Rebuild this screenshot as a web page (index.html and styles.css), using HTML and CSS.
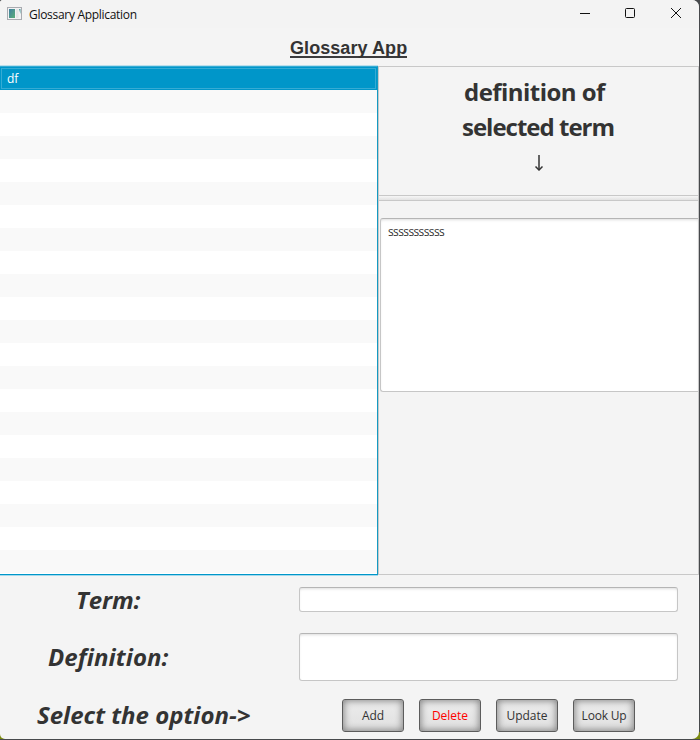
FILE: index.html
```html
<!DOCTYPE html>
<html lang="en">
<head>
<meta charset="utf-8">
<title>Glossary Application</title>
<link rel="stylesheet" href="styles.css">
</head>
<body>
<div class="window">
  <header class="titlebar">
    <svg class="app-icon" width="15" height="13" viewBox="0 0 15 13">
      <defs><linearGradient id="g" x1="0" y1="0" x2="1" y2="1"><stop offset="0" stop-color="#3f7fa0"/><stop offset="1" stop-color="#5aae78"/></linearGradient></defs>
      <rect x=".5" y=".5" width="14" height="12" fill="#f2f2f4" stroke="#a9abb0"/>
      <rect x="2" y="2" width="6" height="9" fill="url(#g)"/>
      <rect x="9" y="2" width="2.5" height="9" fill="#e4e5e6"/>
      <path d="M12 2h1.5v5z" fill="#4c9a9a"/>
    </svg>
    <span class="caption">Glossary Application</span>
    <svg class="controls" width="104" height="12" viewBox="0 0 104 12" fill="none" stroke="#111" stroke-width="1">
      <path d="M1 6.5h10"/>
      <rect x="46.5" y="1.5" width="9" height="9" rx="1"/>
      <path d="M92 1l10 10M102 1L92 11"/>
    </svg>
  </header>
  <h1 class="heading"><span>Glossary App</span></h1>
  <main class="main">
    <div class="list">
      <div class="item"><span class="item-text">df</span></div>
      <div class="stripes"></div>
    </div>
    <section class="side">
      <div class="intro">
        <div class="line l1"><span>definition of</span></div>
        <div class="line l2"><span>selected term</span></div>
        <svg class="arrow" width="10" height="16" viewBox="0 0 10 16" fill="none" stroke="#333" stroke-width="1.5"><path d="M5 0v14"/><path d="M1.5 11.5L5 15l3.5-3.5"/></svg>
      </div>
      <div class="divider"></div>
      <div class="detail"><div class="area"><span>sssssssssss</span></div></div>
    </section>
  </main>
  <footer class="form">
    <div class="label term"><span>Term:</span></div>
    <div class="field small"></div>
    <div class="label defn"><span>Definition:</span></div>
    <div class="field big"></div>
    <div class="label select"><span>Select the option-&gt;</span></div>
    <div class="buttons">
      <button class="add"><span>Add</span></button>
      <button class="delete"><span>Delete</span></button>
      <button class="update"><span>Update</span></button>
      <button class="lookup"><span>Look Up</span></button>
    </div>
  </footer>
</div>
</body>
</html>
```
FILE: styles.css
```css
* { box-sizing: border-box; }
body {
  margin: 0;
  width: 700px;
  height: 740px;
  overflow: hidden;
  background: linear-gradient(#47494c 0 732px, #7b8a10 732px 739px, #47494c 739px);
  font: 12px/16px "Open Sans", "Noto Sans", sans-serif;
  color: #333;
}
.window {
  width: 699px;
  height: 739px;
  background: #f4f4f4;
  border-radius: 3px 7px 7px 5px;
  overflow: hidden;
}
.titlebar {
  height: 28px;
  display: flex;
  align-items: center;
  padding: 0 16px 2px 7px;
  background: #f3f3f3;
}
.caption {
  margin-left: 7px;
  color: #111;
  font: 12px/16px "Open Sans", sans-serif;
  letter-spacing: -.3px;
  padding-top: 3px;
}
.controls { margin-left: auto; }
.heading {
  margin: 0;
  height: 38px;
  padding: 10px 0 0 290px;
  font: bold 18px/20px "Liberation Sans", sans-serif;
  letter-spacing: .07px;
}
.heading span {
  display: inline-block;
  height: 20px;
  border-bottom: 2px solid #3b3b3d;
}
.main { display: flex; height: 509px; }
.list {
  width: 378px;
  height: 509px;
  border-right: 1px solid #149ac2;
  border-bottom: 1px solid #0096c9;
  border-top: 1px solid #35abd4;
  box-shadow: 0 1px #a4d9ec, 0 -1px #b9dfec;
}
.item {
  height: 23px;
  background: #0096c9;
  padding: 1px;
}
.item-text {
  display: block;
  height: 21px;
  border: 1px solid #35abd4;
  color: #fff;
  padding: 2px 5px;
}
.stripes {
  height: 484px;
  background: repeating-linear-gradient(#f9f9f9 0 23px, #fff 23px 46px);
}
.side {
  width: 321px;
  border: 1px solid #c8c8c8;
  height: 509px;
}
.intro { height: 128px; padding-top: 7px; }
.line {
  font: bold 24px/35px "Open Sans", sans-serif;
  height: 35px;
  white-space: nowrap;
}
.l1 { padding-left: 85px; letter-spacing: -.55px; }
.l2 { padding-left: 83px; letter-spacing: -1px; }
.arrow { display: block; margin: 11px 0 0 155px; }
.divider {
  height: 6px;
  border-top: 1px solid #c8c8c8;
  border-bottom: 1px solid #c8c8c8;
  background: linear-gradient(#f6f6f6, #e2e2e2);
}
.detail { padding: 17px 0 0 1px; }
.area, .field {
  background: #fff;
  border: 1px solid #c6c6c6;
  border-top-color: #b5b5b5;
  border-radius: 3px;
  box-shadow: inset 0 2px 3px -1px #ddd;
}
.area {
  height: 174px;
  padding: 5px 7px;
  border-right: 0;
  border-radius: 3px 0 0 3px;
  letter-spacing: -.62px;
}
.form {
  display: grid;
  grid-template-columns: 299px 379px;
  grid-template-rows: 46px 60px 58px;
}
.label {
  font: italic bold 24px/35px "Open Sans", sans-serif;
  white-space: nowrap;
  padding-top: 7px;
}
.term { padding-left: 76px; letter-spacing: -.1px; }
.defn { padding-left: 48px; padding-top: 18px; letter-spacing: .08px; }
.select { padding-left: 37px; padding-top: 16px; }
.field { margin-top: 12px; }
.small { height: 25px; }
.big { height: 48px; }
.buttons {
  display: flex;
  gap: 15px;
  padding: 18px 0 0 43px;
}
button {
  width: 62px;
  height: 33px;
  padding: 0;
  border: 1px solid #5c5c5c;
  border-radius: 3px;
  background: linear-gradient(#ececec, #e0e0e0);
  box-shadow: inset 0 0 7px 1px #858585;
  color: #333;
  font: 12px/16px "Open Sans", sans-serif;
  white-space: nowrap;
}
.add { letter-spacing: -.15px; }
.lookup { letter-spacing: -.2px; }
.delete { color: #f00; }
```
